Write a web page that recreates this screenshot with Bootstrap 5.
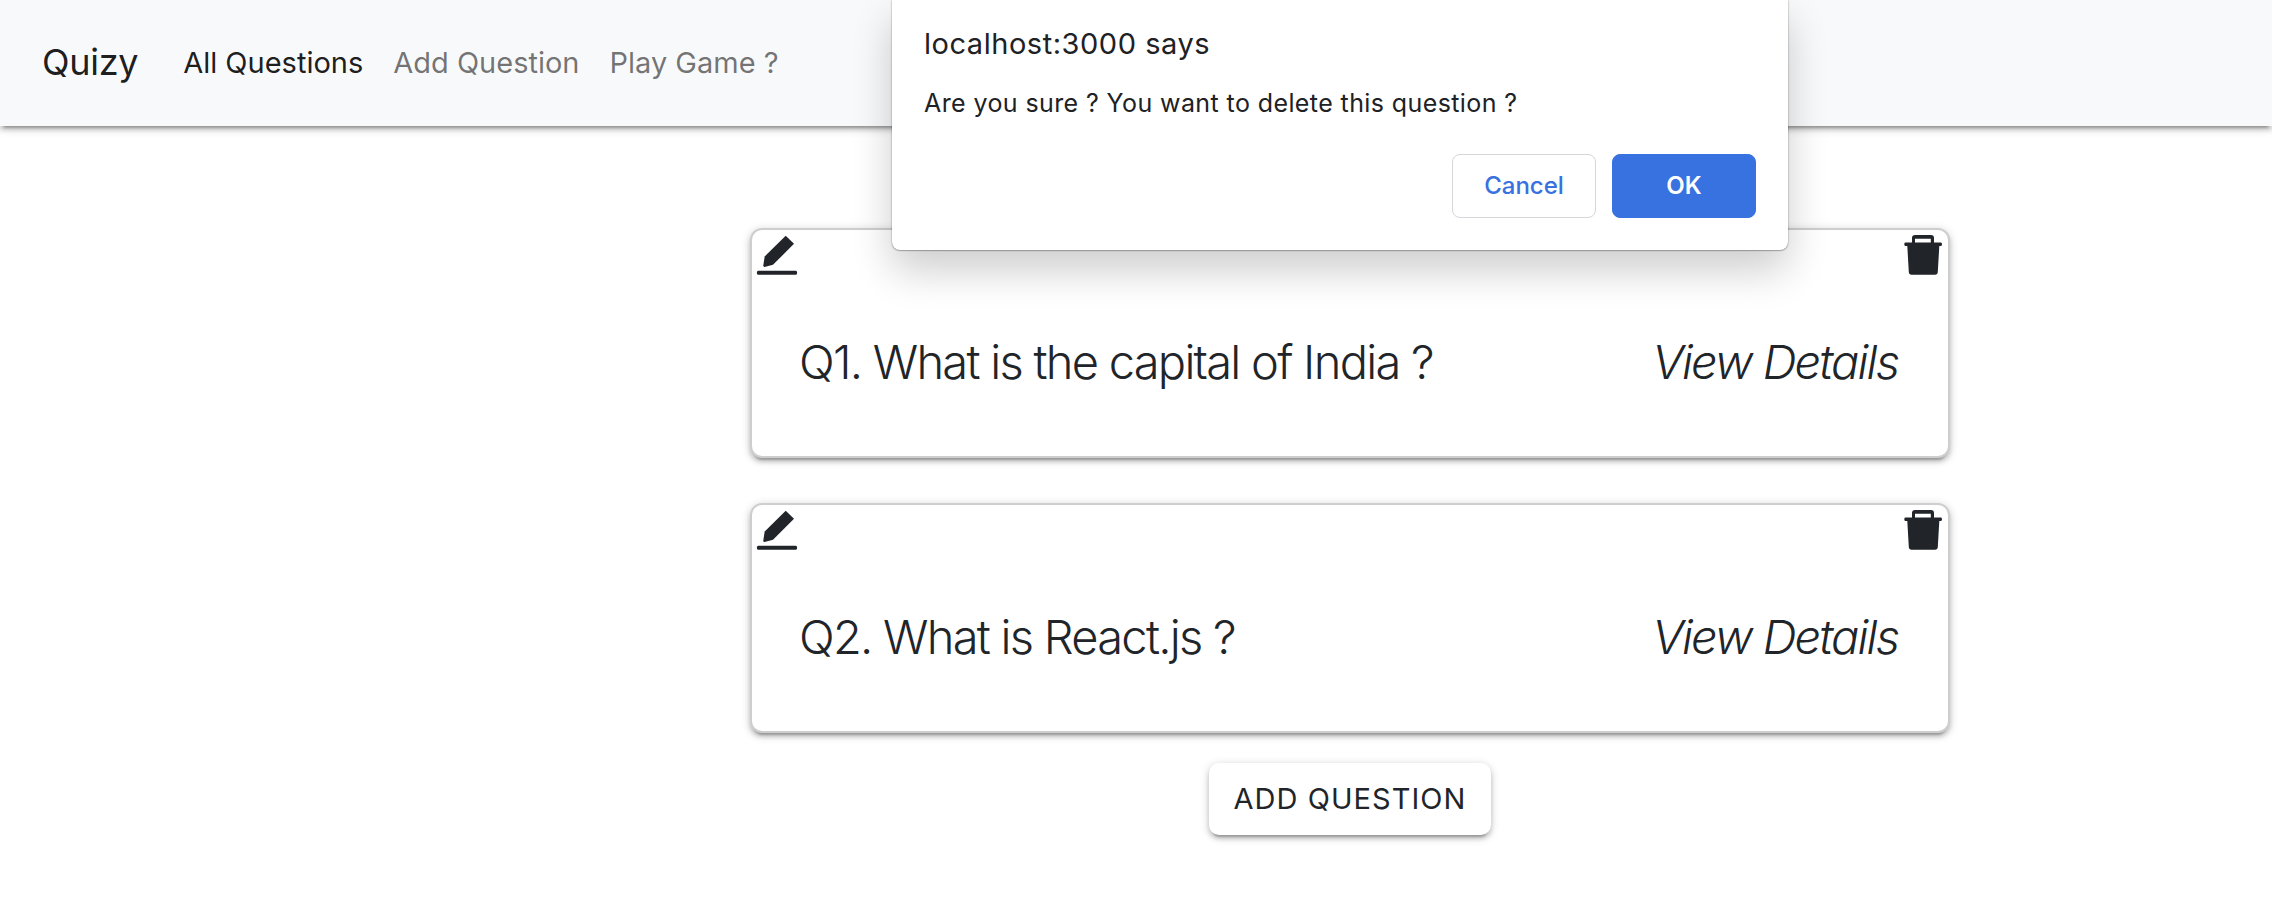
<!DOCTYPE html>
<html lang="en">
<head>
<meta charset="utf-8">
<meta name="viewport" content="width=device-width, initial-scale=1">
<title>Quizy</title>
<link href="https://cdn.jsdelivr.net/npm/bootstrap@5.3.0/dist/css/bootstrap.min.css" rel="stylesheet">
<style>
  :root { --raise: 0 4px 4px 0 rgba(0,0,0,.14), 0 6px 2px -4px rgba(0,0,0,.2), 0 2px 10px 0 rgba(0,0,0,.2); }
  body { font-family: Inter, "Liberation Sans", sans-serif; background: #fff; color: #212529; min-height: 100vh; }
  .topbar { height: 126px; padding: 0 42px; box-shadow: var(--raise); }
  .topbar .navbar-brand { font-size: 36px; letter-spacing: -.3px; margin-right: 31px; padding: 0 0 3px; line-height: 54px; color: rgba(0,0,0,.9); }
  .topbar .navbar-nav .nav-link { font-size: 29px; line-height: 44px; padding: 0 15px; color: rgba(0,0,0,.55); white-space: nowrap; }
  .topbar .navbar-nav .nav-link.active { color: rgba(0,0,0,.9); }
  .topbar .navbar-nav { margin-left: -1px; }
  .questions { width: 1200px; margin: 102px 0 0 750px; }
  .quiz-card { height: 230px; border: 2px solid #cecece; border-radius: 12px; box-shadow: var(--raise); margin-bottom: 45px; }
  .quiz-card:last-of-type { margin-bottom: 30px; }
  .quiz-card svg { width: 48px; height: 48px; fill: #212529; display: block; }
  .quiz-line { padding: 48px 50px 0 47px; font-size: 47px; font-weight: 300; line-height: 72px; letter-spacing: -1.73px; }
  .quiz-line em { letter-spacing: -1.9px; }
  .add-btn { width: 282px; height: 72px; border: 0; border-radius: 10px; background: #fff; color: #212529; box-shadow: var(--raise); font-size: 29px; letter-spacing: 1.05px; padding: 0; }
  .alert-box { top: 0; left: 892px; width: 896px; height: 250px; padding: 22px 32px 32px; border-radius: 0 0 8px 8px; background: #fff; color: #202124; box-shadow: 0 0 2px rgba(0,0,0,.4), 0 1px 1px rgba(0,0,0,.2), 0 20px 40px rgba(0,0,0,.2); z-index: 10; }
  .alert-title { font-size: 29px; line-height: 44px; letter-spacing: .53px; }
  .alert-text { font-size: 25px; line-height: 38px; letter-spacing: .4px; margin-top: 18px; }
  .alert-box .btn { width: 144px; height: 64px; border-radius: 8px; font-size: 24px; font-weight: 500; padding: 0; border: 1px solid #d4d6da; color: #3871e0; background: #fff; }
  .alert-box .btn-ok { background: #3871e0; border-color: #3871e0; color: #fff; font-weight: 600; }
</style>
</head>
<body>
<nav class="navbar navbar-expand bg-light topbar">
  <a class="navbar-brand" href="#">Quizy</a>
  <div class="navbar-nav">
    <a class="nav-link active" href="#">All Questions</a>
    <a class="nav-link" href="#">Add Question</a>
    <a class="nav-link" href="#">Play Game ?</a>
  </div>
</nav>

<main class="questions pb-5">
  <section class="quiz-card bg-white">
    <div class="d-flex justify-content-between">
      <svg viewBox="0 0 48 48"><path d="M33.7 5.7 42 13.8 21 34.8 12.6 37.1Q11.2 37 11.3 35.4L12.7 26.4Z"/><rect x="5" y="40.8" width="40" height="4" rx="1.4"/></svg>
      <svg viewBox="0 0 48 48"><path fill-rule="evenodd" d="M12 12.5V8Q12 5 15 5H31Q34 5 34 8V12.5H41Q42 12.5 42 14.2T41 16H39.3L37.8 42Q37.6 44.8 35 44.8H11.6Q9 44.8 8.8 42L7.3 16H5.3Q4.3 16 4.3 14.2T5.3 12.5ZM15 12.5H30.8V8.8H15Z"/></svg>
    </div>
    <div class="quiz-line d-flex justify-content-between"><span>Q1. What is the capital of India ?</span><em>View Details</em></div>
  </section>
  <section class="quiz-card bg-white">
    <div class="d-flex justify-content-between">
      <svg viewBox="0 0 48 48"><path d="M33.7 5.7 42 13.8 21 34.8 12.6 37.1Q11.2 37 11.3 35.4L12.7 26.4Z"/><rect x="5" y="40.8" width="40" height="4" rx="1.4"/></svg>
      <svg viewBox="0 0 48 48"><path fill-rule="evenodd" d="M12 12.5V8Q12 5 15 5H31Q34 5 34 8V12.5H41Q42 12.5 42 14.2T41 16H39.3L37.8 42Q37.6 44.8 35 44.8H11.6Q9 44.8 8.8 42L7.3 16H5.3Q4.3 16 4.3 14.2T5.3 12.5ZM15 12.5H30.8V8.8H15Z"/></svg>
    </div>
    <div class="quiz-line d-flex justify-content-between"><span>Q2. What is React.js ?</span><em>View Details</em></div>
  </section>
  <div class="d-flex justify-content-center"><button class="btn add-btn" type="button">ADD QUESTION</button></div>
</main>

<div class="alert-box position-absolute d-flex flex-column" role="alertdialog">
  <div class="alert-title">localhost:3000 says</div>
  <div class="alert-text">Are you sure ? You want to delete this question ?</div>
  <div class="d-flex justify-content-end gap-3 mt-auto">
    <button class="btn" type="button">Cancel</button>
    <button class="btn btn-ok" type="button">OK</button>
  </div>
</div>
<script src="https://cdn.jsdelivr.net/npm/bootstrap@5.3.0/dist/js/bootstrap.bundle.min.js"></script>
</body>
</html>
